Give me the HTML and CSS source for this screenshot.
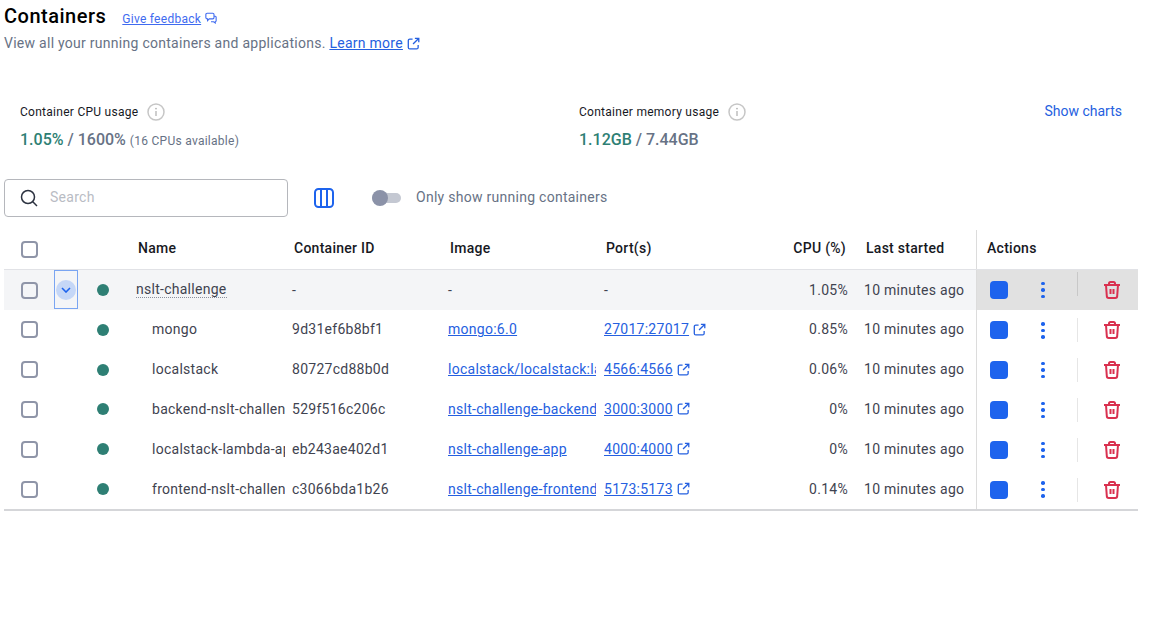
FILE: index.html
```html
<!DOCTYPE html>
<html lang="en">
<head>
    <meta charset="UTF-8">
    <title>Containers</title>
    <link rel="stylesheet" href="styles.css">
</head>
<body>
<svg class="sprite" width="0" height="0">
    <symbol id="ext" viewBox="0 0 14 14">
        <path d="M6 2.2H3a1.6 1.6 0 0 0-1.6 1.6v7.4A1.6 1.6 0 0 0 3 12.800h7.400a1.600 1.600 0 0 0 1.600-1.600V8.500M8.500 1.400h4.200v4.200M12.500 1.600 6.500 7.600" fill="none" stroke="currentColor" stroke-width="1.400"/>
    </symbol>
    <symbol id="info" viewBox="0 0 18 18">
        <circle cx="9" cy="9" r="8" fill="none" stroke="#c6c6c6" stroke-width="1.500"/>
        <path d="M9 8v5" stroke="#b4b4b4" stroke-width="1.300"/>
        <circle cx="9" cy="5.600" r="0.900" fill="#b4b4b4"/>
    </symbol>
    <symbol id="trash" viewBox="0 0 18 18">
        <path d="M1 4h16M6 4V2.500A1.500 1.500 0 0 1 7.500 1h3A1.500 1.500 0 0 1 12 2.500V4M3 4l.8 11a2 2 0 0 0 2 2h6.400a2 2 0 0 0 2-2L15 4M7.500 8v5M10.500 8v5" fill="none" stroke="#d9304f" stroke-width="2"/>
    </symbol>
</svg>

<header class="page-head">
    <div class="title-line">
        <h1>Containers</h1>
        <a class="feedback" href="#">Give feedback</a>
        <svg class="feedback-icon" width="12" height="12" viewBox="0 0 14 14"><path d="M2.500 1.500h6.500a1.500 1.500 0 0 1 1.500 1.500v3.500a1.500 1.500 0 0 1-1.500 1.500H5L3 10V8h-.5A1.500 1.500 0 0 1 1 6.500V3a1.500 1.500 0 0 1 1.500-1.500zM11 5h1a1.200 1.200 0 0 1 1 1.200v4a1.200 1.200 0 0 1-1 1.200v1.400l-2-1.400H7" fill="none" stroke="currentColor" stroke-width="1.300"/></svg>
    </div>
    <p class="subtitle">View all your running containers and applications. <a href="#">Learn more</a><svg class="ext ext-learn" width="13" height="13"><use href="#ext"/></svg></p>
</header>

<section class="stats">
    <div class="stat stat-cpu">
        <div class="stat-label">Container CPU usage <svg class="info" width="18" height="18"><use href="#info"/></svg></div>
        <div class="stat-value"><span class="used">1.05%</span> / 1600% <small>(16 CPUs available)</small></div>
    </div>
    <div class="stat stat-mem">
        <div class="stat-label">Container memory usage <svg class="info" width="18" height="18"><use href="#info"/></svg></div>
        <div class="stat-value"><span class="used">1.12GB</span> / 7.44GB</div>
    </div>
    <a class="show-charts" href="#">Show charts</a>
</section>

<section class="toolbar">
    <div class="search">
        <svg width="18" height="18" viewBox="0 0 18 18"><circle cx="8" cy="8" r="6.500" fill="none" stroke="#2c3240" stroke-width="1.500"/><path d="M12.800 12.800 17 17" stroke="#2c3240" stroke-width="1.500"/></svg>
        <span>Search</span>
    </div>
    <svg class="columns" width="20" height="20" viewBox="0 0 20 20"><rect x="1" y="1" width="18" height="18" rx="3.500" fill="none" stroke="#1d63ed" stroke-width="2"/><path d="M7 1v18M13 1v18" stroke="#1d63ed" stroke-width="2"/></svg>
    <span class="toggle"><i></i></span>
    <span class="toggle-label">Only show running containers</span>
</section>

<section class="table">
    <div class="row head">
        <div class="cell"><span class="check"></span></div>
        <div class="cell"></div>
        <div class="cell"></div>
        <div class="cell name">Name</div>
        <div class="cell id">Container ID</div>
        <div class="cell image">Image</div>
        <div class="cell port">Port(s)</div>
        <div class="cell cpu">CPU (%)</div>
        <div class="cell started">Last started</div>
        <div class="cell actions">Actions</div>
    </div>

    <div class="row group">
        <div class="cell"><span class="check"></span></div>
        <div class="cell expand"><span class="chev"><svg width="10" height="6" viewBox="0 0 10 6"><path d="M1 1l4 4 4-4" fill="none" stroke="#1d63ed" stroke-width="1.600"/></svg></span></div>
        <div class="cell"><span class="dot"></span></div>
        <div class="cell name"><span class="dotted">nslt-challenge</span></div>
        <div class="cell id">-</div>
        <div class="cell image">-</div>
        <div class="cell port">-</div>
        <div class="cell cpu">1.05%</div>
        <div class="cell started">10 minutes ago</div>
        <div class="cell actions"><span class="stop"></span><span class="kebab"><i></i><i></i><i></i></span><span class="sep"></span><svg class="trash" width="18" height="18"><use href="#trash"/></svg></div>
    </div>

    <div class="row">
        <div class="cell"><span class="check"></span></div>
        <div class="cell"></div>
        <div class="cell"><span class="dot"></span></div>
        <div class="cell name child">mongo</div>
        <div class="cell id">9d31ef6b8bf1</div>
        <div class="cell image"><a href="#">mongo:6.0</a></div>
        <div class="cell port"><a href="#">27017:27017</a><svg class="ext" width="13" height="13"><use href="#ext"/></svg></div>
        <div class="cell cpu">0.85%</div>
        <div class="cell started">10 minutes ago</div>
        <div class="cell actions"><span class="stop"></span><span class="kebab"><i></i><i></i><i></i></span><span class="sep"></span><svg class="trash" width="18" height="18"><use href="#trash"/></svg></div>
    </div>

    <div class="row">
        <div class="cell"><span class="check"></span></div>
        <div class="cell"></div>
        <div class="cell"><span class="dot"></span></div>
        <div class="cell name child">localstack</div>
        <div class="cell id">80727cd88b0d</div>
        <div class="cell image"><a href="#">localstack/localstack:latest</a></div>
        <div class="cell port"><a href="#">4566:4566</a><svg class="ext" width="13" height="13"><use href="#ext"/></svg></div>
        <div class="cell cpu">0.06%</div>
        <div class="cell started">10 minutes ago</div>
        <div class="cell actions"><span class="stop"></span><span class="kebab"><i></i><i></i><i></i></span><span class="sep"></span><svg class="trash" width="18" height="18"><use href="#trash"/></svg></div>
    </div>

    <div class="row">
        <div class="cell"><span class="check"></span></div>
        <div class="cell"></div>
        <div class="cell"><span class="dot"></span></div>
        <div class="cell name child">backend-nslt-challenge-1</div>
        <div class="cell id">529f516c206c</div>
        <div class="cell image"><a href="#">nslt-challenge-backend</a></div>
        <div class="cell port"><a href="#">3000:3000</a><svg class="ext" width="13" height="13"><use href="#ext"/></svg></div>
        <div class="cell cpu">0%</div>
        <div class="cell started">10 minutes ago</div>
        <div class="cell actions"><span class="stop"></span><span class="kebab"><i></i><i></i><i></i></span><span class="sep"></span><svg class="trash" width="18" height="18"><use href="#trash"/></svg></div>
    </div>

    <div class="row">
        <div class="cell"><span class="check"></span></div>
        <div class="cell"></div>
        <div class="cell"><span class="dot"></span></div>
        <div class="cell name child">localstack-lambda-app-1</div>
        <div class="cell id">eb243ae402d1</div>
        <div class="cell image"><a href="#">nslt-challenge-app</a></div>
        <div class="cell port"><a href="#">4000:4000</a><svg class="ext" width="13" height="13"><use href="#ext"/></svg></div>
        <div class="cell cpu">0%</div>
        <div class="cell started">10 minutes ago</div>
        <div class="cell actions"><span class="stop"></span><span class="kebab"><i></i><i></i><i></i></span><span class="sep"></span><svg class="trash" width="18" height="18"><use href="#trash"/></svg></div>
    </div>

    <div class="row">
        <div class="cell"><span class="check"></span></div>
        <div class="cell"></div>
        <div class="cell"><span class="dot"></span></div>
        <div class="cell name child">frontend-nslt-challenge-1</div>
        <div class="cell id">c3066bda1b26</div>
        <div class="cell image"><a href="#">nslt-challenge-frontend</a></div>
        <div class="cell port"><a href="#">5173:5173</a><svg class="ext" width="13" height="13"><use href="#ext"/></svg></div>
        <div class="cell cpu">0.14%</div>
        <div class="cell started">10 minutes ago</div>
        <div class="cell actions"><span class="stop"></span><span class="kebab"><i></i><i></i><i></i></span><span class="sep"></span><svg class="trash" width="18" height="18"><use href="#trash"/></svg></div>
    </div>
</section>
</body>
</html>
```

FILE: styles.css
```css
* {
    box-sizing: border-box;
}
html, body {
    height: 100%;
    overflow: hidden;
}
body {
    margin: 0;
    padding: 0 29px 0 4px;
    background: #fff;
    color: #3f4350;
    font-family: Roboto, "Liberation Sans", sans-serif;
    font-size: 14px;
    letter-spacing: 0.27px;
}
a {
    color: #2560e0;
    text-decoration: underline;
}
.sprite {
    position: absolute;
}

/* header */
.page-head {
    height: 78px;
    padding-top: 4px;
}
.title-line {
    display: flex;
    align-items: baseline;
    height: 24px;
}
h1 {
    margin: 0;
    font-size: 20px;
    line-height: 24px;
    font-weight: 500;
    letter-spacing: 0.5px;
    color: #000;
}
.feedback {
    margin-left: 16px;
    font-size: 12px;
    color: #3f6bf0;
}
.feedback-icon {
    margin-left: 4px;
    color: #3f6bf0;
    align-self: center;
    position: relative;
    top: 2px;
}
.subtitle {
    margin: 6px 0 0;
    line-height: 18px;
    color: #677285;
}
.ext {
    flex: none;
    margin-left: 4px;
    vertical-align: -2px;
    color: #2560e0;
}

/* cpu / memory */
.stats {
    display: flex;
    padding-left: 16px;
    height: 101px;
    padding-top: 24px;
}
.stat-cpu {
    width: 559px;
}
.stat-mem {
    flex: 1;
}
.stat-label {
    display: flex;
    align-items: center;
    gap: 9px;
    height: 20px;
    font-size: 12px;
    color: #17191f;
}
.stat-value {
    margin-top: 8px;
    line-height: 20px;
    font-size: 16px;
    font-weight: 500;
    letter-spacing: 0;
    color: #677285;
}
.stat-value small {
    font-size: 12px;
    font-weight: 400;
    letter-spacing: 0.27px;
}
.used {
    color: #2e7f74;
}
.show-charts {
    margin-top: -1px;
    padding-right: 16px;
    font-size: 14px;
    line-height: 20px;
    letter-spacing: 0;
    text-decoration: none;
    color: #2560e0;
}

/* search row */
.toolbar {
    display: flex;
    align-items: center;
    height: 38px;
    margin-bottom: 13px;
}
.search {
    display: flex;
    align-items: center;
    gap: 12px;
    width: 284px;
    height: 38px;
    padding-left: 15px;
    border: 1px solid #b5b7bc;
    border-radius: 4px;
    color: #b9bcc4;
}
.search span {
    padding-bottom: 2px;
}
.columns {
    margin-left: 26px;
}
.toggle {
    position: relative;
    width: 29px;
    height: 10px;
    margin-left: 38px;
    border-radius: 5px;
    background: #c4c8d2;
}
.toggle i {
    position: absolute;
    left: 0;
    top: -3px;
    width: 16px;
    height: 16px;
    border-radius: 50%;
    background: #8b92a8;
}
.toggle-label {
    margin-left: 15px;
    padding-bottom: 2px;
    color: #677285;
}

/* table */
.table {
    border-bottom: 2px solid #d5d6d9;
}
.row {
    display: grid;
    grid-template-columns: 50px 24px 50px 160px 156px 156px 170px 78px 128px 162px;
    height: 39.800px;
    align-items: stretch;
}
.row.head {
    height: 40px;
    font-weight: 500;
    color: #17191f;
    border-bottom: 1px solid #e1e2e6;
}
.row.group {
    height: 40px;
    background: #f4f5f7;
}
.cell {
    display: flex;
    align-items: center;
    min-width: 0;
    white-space: nowrap;
    overflow: hidden;
}
.cell:first-child {
    padding-left: 17px;
}
.name, .id, .image, .port, .cpu, .started {
    padding-bottom: 1px;
}
.head .cell:not(:first-child) {
    padding-bottom: 3px;
    padding-top: 0;
}
.check {
    width: 17px;
    height: 17px;
    border: 2px solid #8f95a8;
    border-radius: 4px;
    background: #fff;
    flex: none;
}
.group .check {
    background: transparent;
}
.dot {
    width: 12px;
    height: 12px;
    margin-left: 19px;
    border-radius: 50%;
    background: #2e7f74;
}
.name {
    margin-right: 3px;
    padding-left: 8px;
}
.name.child {
    padding-left: 24px;
}
.head .name {
    padding-left: 10px;
}
.id, .image, .port {
    padding-left: 4px;
}
.image {
    margin-right: 4px;
}
.head .id, .head .image, .head .port {
    padding-left: 6px;
}
.cpu {
    justify-content: flex-end;
}
.head .cpu {
    padding-right: 2px;
}
.started {
    padding-left: 16px;
}
.head .started {
    padding-left: 18px;
}
.actions {
    padding-left: 13px;
    padding-top: 1px;
    border-left: 1px solid #dcdcdc;
}
.head .actions {
    padding-left: 10px;
}
.group .actions {
    background: #e1e1e1;
    padding-top: 0;
}
.dotted {
    border-bottom: 1px dotted #8a8f9c;
    line-height: 16px;
}
.expand {
    justify-content: center;
    border: 1px solid #7aa5f2;
    margin-bottom: 1px;
}
.chev {
    display: flex;
    align-items: center;
    justify-content: center;
    width: 20px;
    height: 20px;
    border-radius: 50%;
    background: #c5d7f7;
}
.stop {
    flex: none;
    width: 18px;
    height: 18px;
    border-radius: 4px;
    background: #1d63ed;
}
.kebab {
    display: flex;
    flex-direction: column;
    align-items: center;
    gap: 3px;
    width: 24px;
    margin-left: 23px;
}
.kebab i {
    width: 3.500px;
    height: 3.500px;
    border-radius: 50%;
    background: #1d63ed;
}
.sep {
    width: 1px;
    height: 24px;
    margin-left: 22px;
    background: #e6e6e6;
}
.group .sep {
    margin-bottom: 12px;
    background: #c8c8c8;
}
.trash {
    margin-left: 25px;
}
```
